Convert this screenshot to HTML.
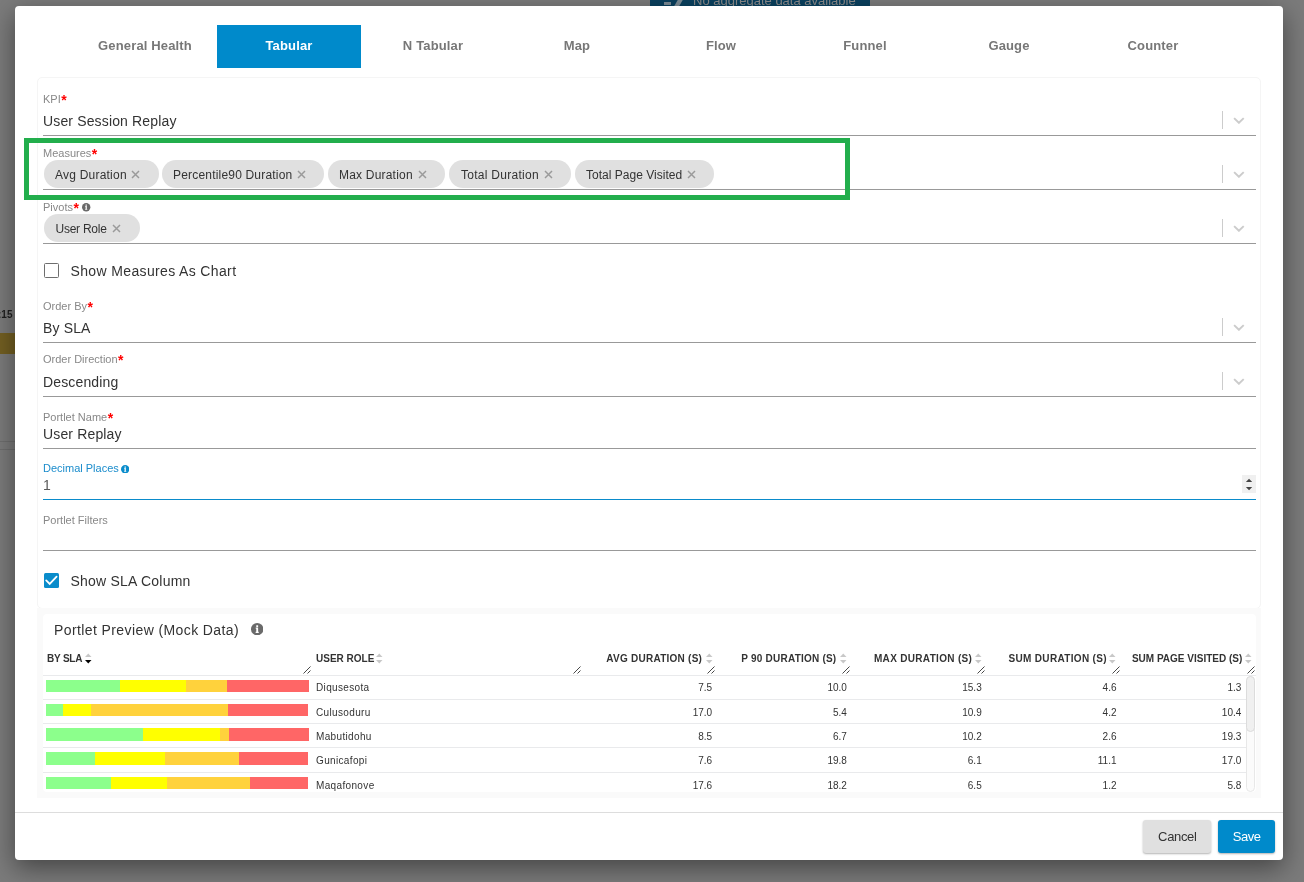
<!DOCTYPE html>
<html><head><meta charset="utf-8">
<style>
*{box-sizing:border-box;margin:0;padding:0}
html,body{width:1304px;height:882px;overflow:hidden}
body{background:#7b7b7b;font-family:"Liberation Sans",sans-serif;position:relative;color:#333;will-change:transform}
.a{position:absolute;white-space:nowrap;line-height:20px}
#modal{position:absolute;left:15px;top:6px;width:1268px;height:854px;background:#fff;border-radius:4px;box-shadow:0 8px 26px rgba(0,0,0,.45)}
.tab{position:absolute;top:25px;height:43px;width:144px;text-align:center;font-weight:bold;font-size:13px;line-height:41px;color:#777;letter-spacing:0.15px}
.tab.on{background:#008acb;color:#fff}
.lbl{font-size:11px;color:#888}
.lbl b{color:#f00;font-weight:bold;font-size:14px;position:relative;top:1.5px;left:0.5px;line-height:10px}
.val{font-size:14px;color:#333;letter-spacing:0.15px}
.ul{position:absolute;left:43px;width:1213px;height:1px;background:#999}
.sep{position:absolute;left:1222px;width:1px;height:18px;background:#ccc}
.chev{position:absolute;left:1233px;width:12px;height:7px}
.chip{position:absolute;height:28px;border-radius:14px;background:#e0e0e0}
.chip span{position:absolute;font-size:12px;color:#333;line-height:20px;white-space:nowrap}
.x{position:absolute;width:9px;height:9px}
.th{font-size:10px;font-weight:bold;color:#333}
.td{font-size:10px;color:#333}
</style></head><body>
<!-- background page bits -->
<div style="position:absolute;left:650px;top:0;width:220px;height:8px;background:#0a415f"></div>
<div style="position:absolute;left:664px;top:2px;width:7px;height:3px;background:#7d8c96"></div>
<div style="position:absolute;left:676px;top:0px;width:5px;height:6px;background:#7d8c96;transform:skewX(-30deg)"></div>
<div class="a" style="left:693px;top:-9px;font-size:13px;color:#8c8c8c">No aggregate data available</div>
<div class="a" style="left:-2px;top:305px;font-size:10px;font-weight:bold;color:#1e1e1e">:15</div>
<div style="position:absolute;left:0;top:333px;width:15px;height:21px;background:#735f22"></div>
<div style="position:absolute;left:0;top:441px;width:15px;height:1px;background:#6e6e6e"></div>
<div style="position:absolute;left:0;top:449px;width:15px;height:1px;background:#6e6e6e"></div>

<div id="modal"></div>

<!-- tabs -->
<div class="tab" style="left:73px">General Health</div>
<div class="tab on" style="left:217px">Tabular</div>
<div class="tab" style="left:361px">N Tabular</div>
<div class="tab" style="left:505px">Map</div>
<div class="tab" style="left:649px">Flow</div>
<div class="tab" style="left:793px">Funnel</div>
<div class="tab" style="left:937px">Gauge</div>
<div class="tab" style="left:1081px">Counter</div>

<!-- form card -->
<div style="position:absolute;left:37px;top:77px;width:1224px;height:532px;border:1px solid #f5f5f5;border-radius:5px"></div>

<!-- KPI -->
<div class="a lbl" style="left:43px;top:89px">KPI<b>*</b></div>
<div class="a val" style="left:43px;top:111px">User Session Replay</div>
<div class="ul" style="top:135px"></div>
<div class="sep" style="top:111px"></div>
<svg class="chev" style="top:117px" viewBox="0 0 12 7"><path d="M1.1 1.1l4.8 4.7 4.8-4.7" fill="none" stroke="#ccc" stroke-width="1.9"/></svg>

<!-- Measures -->
<div class="a lbl" style="left:43px;top:143px">Measures<b>*</b></div>
<div class="chip" style="left:44px;top:160px;width:115px"><span style="left:11px;top:5px;letter-spacing:0.22px">Avg Duration</span></div>
<div class="chip" style="left:162px;top:160px;width:162px"><span style="left:11px;top:5px;letter-spacing:0.19px">Percentile90 Duration</span></div>
<div class="chip" style="left:328px;top:160px;width:117px"><span style="left:11px;top:5px;letter-spacing:0.2px">Max Duration</span></div>
<div class="chip" style="left:449px;top:160px;width:122px"><span style="left:12px;top:5px;letter-spacing:0.28px">Total Duration</span></div>
<div class="chip" style="left:575px;top:160px;width:139px"><span style="left:11px;top:5px;letter-spacing:0.02px">Total Page Visited</span></div>
<div class="ul" style="top:189px"></div>
<div class="sep" style="top:165px"></div>
<svg class="chev" style="top:171px" viewBox="0 0 12 7"><path d="M1.1 1.1l4.8 4.7 4.8-4.7" fill="none" stroke="#ccc" stroke-width="1.9"/></svg>

<!-- Pivots -->
<div class="a lbl" style="left:43px;top:197px">Pivots<b>*</b></div>
<div class="chip" style="left:44px;top:214px;width:96px"><span style="left:11.5px;top:5px;letter-spacing:-0.25px">User Role</span></div>
<div class="ul" style="top:243px"></div>
<div class="sep" style="top:219px"></div>
<svg class="chev" style="top:225px" viewBox="0 0 12 7"><path d="M1.1 1.1l4.8 4.7 4.8-4.7" fill="none" stroke="#ccc" stroke-width="1.9"/></svg>


<!-- chip x icons -->
<svg class="x" style="left:131.2px;top:170px" viewBox="0 0 9 9"><path d="M1 1l7 7M8 1l-7 7" stroke="#9a9a9a" stroke-width="1.45"/></svg>
<svg class="x" style="left:297px;top:170px" viewBox="0 0 9 9"><path d="M1 1l7 7M8 1l-7 7" stroke="#9a9a9a" stroke-width="1.45"/></svg>
<svg class="x" style="left:418px;top:170px" viewBox="0 0 9 9"><path d="M1 1l7 7M8 1l-7 7" stroke="#9a9a9a" stroke-width="1.45"/></svg>
<svg class="x" style="left:544px;top:170px" viewBox="0 0 9 9"><path d="M1 1l7 7M8 1l-7 7" stroke="#9a9a9a" stroke-width="1.45"/></svg>
<svg class="x" style="left:687px;top:170px" viewBox="0 0 9 9"><path d="M1 1l7 7M8 1l-7 7" stroke="#9a9a9a" stroke-width="1.45"/></svg>
<svg class="x" style="left:112px;top:224px" viewBox="0 0 9 9"><path d="M1 1l7 7M8 1l-7 7" stroke="#9a9a9a" stroke-width="1.45"/></svg>
<!-- pivots info -->
<svg style="position:absolute;left:82.2px;top:203.4px;width:8.4px;height:8.4px" viewBox="0 0 12 12"><circle cx="6" cy="6" r="6" fill="#6a6a6a"/><path d="M5.1 2.3h1.8v1.5h-1.8z M4.6 4.4h2.3v4.1h0.6v1.1h-3v-1.1h0.6v-3h-0.5z" fill="#fff"/></svg>

<!-- show measures as chart -->
<div style="position:absolute;left:44px;top:263px;width:15px;height:15px;border:1.5px solid #6e6e6e;border-radius:1.5px"></div>
<div class="a val" style="left:70.5px;top:261px;letter-spacing:0.36px">Show Measures As Chart</div>

<!-- Order By -->
<div class="a lbl" style="left:43px;top:296px">Order By<b>*</b></div>
<div class="a val" style="left:43px;top:318px">By SLA</div>
<div class="ul" style="top:342px"></div>
<div class="sep" style="top:318px"></div>
<svg class="chev" style="top:324px" viewBox="0 0 12 7"><path d="M1.1 1.1l4.8 4.7 4.8-4.7" fill="none" stroke="#ccc" stroke-width="1.9"/></svg>

<!-- Order Direction -->
<div class="a lbl" style="left:43px;top:349px">Order Direction<b>*</b></div>
<div class="a val" style="left:43px;top:372px">Descending</div>
<div class="ul" style="top:396px"></div>
<div class="sep" style="top:372px"></div>
<svg class="chev" style="top:378px" viewBox="0 0 12 7"><path d="M1.1 1.1l4.8 4.7 4.8-4.7" fill="none" stroke="#ccc" stroke-width="1.9"/></svg>

<!-- Portlet Name -->
<div class="a lbl" style="left:43px;top:407px">Portlet Name<b>*</b></div>
<div class="a val" style="left:43px;top:424px">User Replay</div>
<div class="ul" style="top:448px"></div>

<!-- Decimal Places -->
<div class="a lbl" style="left:43px;top:458px;color:#1a8ccc">Decimal Places</div>
<svg style="position:absolute;left:121px;top:465px;width:8.4px;height:8.4px" viewBox="0 0 12 12"><circle cx="6" cy="6" r="6" fill="#0a8ccb"/><path d="M5.1 2.3h1.8v1.5h-1.8z M4.6 4.4h2.3v4.1h0.6v1.1h-3v-1.1h0.6v-3h-0.5z" fill="#fff"/></svg>
<div class="a val" style="left:43px;top:475px;color:#5a5a5a">1</div>
<div style="position:absolute;left:1242px;top:475px;width:14px;height:18px;background:#f0f0f0"></div>
<svg style="position:absolute;left:1244px;top:477px;width:10px;height:14px" viewBox="0 0 10 14"><path d="M1.9 5L5.05 1.8L8.2 5z M1.9 10L5.05 13.2L8.2 10z" fill="#444"/></svg>
<div class="ul" style="top:499px;background:#0a8bcb"></div>

<!-- Portlet Filters -->
<div class="a lbl" style="left:43px;top:510px">Portlet Filters</div>
<div class="ul" style="top:550px"></div>

<!-- show sla column -->
<div style="position:absolute;left:44px;top:573px;width:15px;height:15px;background:#0a8ccb;border-radius:1.5px"></div>
<svg style="position:absolute;left:44px;top:573px;width:15px;height:15px" viewBox="0 0 15 15"><path d="M2.2 7.4L5.7 10.9L12.6 3.6" fill="none" stroke="#fff" stroke-width="1.8" stroke-linecap="round"/></svg>
<div class="a val" style="left:70.5px;top:571px;letter-spacing:0.22px">Show SLA Column</div>

<!-- preview container -->
<div style="position:absolute;left:37px;top:608px;width:1224px;height:190px;background:#fafafa"></div>
<div style="position:absolute;left:43px;top:614px;width:1213px;height:178px;background:#fff;border-radius:4px"></div>
<div class="a val" style="left:54px;top:620px;letter-spacing:0.4px">Portlet Preview (Mock Data)</div>
<svg style="position:absolute;left:250.8px;top:623px;width:12.4px;height:12.4px" viewBox="0 0 12 12"><circle cx="6" cy="6" r="6" fill="#6a6a6a"/><path d="M5.1 2.3h1.8v1.5h-1.8z M4.6 4.4h2.3v4.1h0.6v1.1h-3v-1.1h0.6v-3h-0.5z" fill="#fff"/></svg>

<!-- table -->
<div style="position:absolute;left:43px;top:675px;width:1213px;height:1px;background:#e9eaec"></div>
<div class="a th" style="left:47px;top:649px;letter-spacing:-0.2px">BY SLA</div>
<svg style="position:absolute;left:85px;top:653px;width:7px;height:11px" viewBox="0 0 7 11"><path d="M0 4L3.25 0.5L6.5 4z" fill="#c8c8c8"/><path d="M0 7L3.25 10.5L6.5 7z" fill="#000"/></svg>
<div class="a th" style="left:316px;top:649px">USER ROLE</div>
<svg style="position:absolute;left:376.0px;top:653px;width:7px;height:11px" viewBox="0 0 7 11"><path d="M0 4L3.25 0.5L6.5 4z" fill="#c8c8c8"/><path d="M0 7L3.25 10.5L6.5 7z" fill="#c8c8c8"/></svg>
<div class="a th" style="right:601.8px;top:649px;text-align:right;letter-spacing:0.25px">AVG DURATION (S)</div>
<svg style="position:absolute;left:705.5px;top:653px;width:7px;height:11px" viewBox="0 0 7 11"><path d="M0 4L3.25 0.5L6.5 4z" fill="#c8c8c8"/><path d="M0 7L3.25 10.5L6.5 7z" fill="#c8c8c8"/></svg>
<div class="a th" style="right:467.6px;top:649px;text-align:right;letter-spacing:0.22px">P 90 DURATION (S)</div>
<svg style="position:absolute;left:840.0px;top:653px;width:7px;height:11px" viewBox="0 0 7 11"><path d="M0 4L3.25 0.5L6.5 4z" fill="#c8c8c8"/><path d="M0 7L3.25 10.5L6.5 7z" fill="#c8c8c8"/></svg>
<div class="a th" style="right:331.8px;top:649px;text-align:right;letter-spacing:0.32px">MAX DURATION (S)</div>
<svg style="position:absolute;left:974.5px;top:653px;width:7px;height:11px" viewBox="0 0 7 11"><path d="M0 4L3.25 0.5L6.5 4z" fill="#c8c8c8"/><path d="M0 7L3.25 10.5L6.5 7z" fill="#c8c8c8"/></svg>
<div class="a th" style="right:197.2px;top:649px;text-align:right;letter-spacing:0.32px">SUM DURATION (S)</div>
<svg style="position:absolute;left:1109.0px;top:653px;width:7px;height:11px" viewBox="0 0 7 11"><path d="M0 4L3.25 0.5L6.5 4z" fill="#c8c8c8"/><path d="M0 7L3.25 10.5L6.5 7z" fill="#c8c8c8"/></svg>
<div class="a th" style="right:61.7px;top:649px;text-align:right">SUM PAGE VISITED (S)</div>
<svg style="position:absolute;left:1244.5px;top:653px;width:7px;height:11px" viewBox="0 0 7 11"><path d="M0 4L3.25 0.5L6.5 4z" fill="#c8c8c8"/><path d="M0 7L3.25 10.5L6.5 7z" fill="#c8c8c8"/></svg>
<svg style="position:absolute;left:302.5px;top:665px;width:9px;height:10px" viewBox="0 0 9 10"><path d="M0.5 8.5L7.5 1.5M4.5 8.5L7.5 5.5" stroke="#333" stroke-width="0.9"/></svg>
<svg style="position:absolute;left:572.5px;top:665px;width:9px;height:10px" viewBox="0 0 9 10"><path d="M0.5 8.5L7.5 1.5M4.5 8.5L7.5 5.5" stroke="#333" stroke-width="0.9"/></svg>
<svg style="position:absolute;left:706.5px;top:665px;width:9px;height:10px" viewBox="0 0 9 10"><path d="M0.5 8.5L7.5 1.5M4.5 8.5L7.5 5.5" stroke="#333" stroke-width="0.9"/></svg>
<svg style="position:absolute;left:841.5px;top:665px;width:9px;height:10px" viewBox="0 0 9 10"><path d="M0.5 8.5L7.5 1.5M4.5 8.5L7.5 5.5" stroke="#333" stroke-width="0.9"/></svg>
<svg style="position:absolute;left:976.5px;top:665px;width:9px;height:10px" viewBox="0 0 9 10"><path d="M0.5 8.5L7.5 1.5M4.5 8.5L7.5 5.5" stroke="#333" stroke-width="0.9"/></svg>
<svg style="position:absolute;left:1111.5px;top:665px;width:9px;height:10px" viewBox="0 0 9 10"><path d="M0.5 8.5L7.5 1.5M4.5 8.5L7.5 5.5" stroke="#333" stroke-width="0.9"/></svg>
<svg style="position:absolute;left:1246.5px;top:665px;width:9px;height:10px" viewBox="0 0 9 10"><path d="M0.5 8.5L7.5 1.5M4.5 8.5L7.5 5.5" stroke="#333" stroke-width="0.9"/></svg>
<div style="position:absolute;left:43px;top:699px;width:1203px;height:1px;background:#e9eaec"></div>
<div style="position:absolute;left:43px;top:723px;width:1203px;height:1px;background:#e9eaec"></div>
<div style="position:absolute;left:43px;top:747px;width:1203px;height:1px;background:#e9eaec"></div>
<div style="position:absolute;left:43px;top:772px;width:1203px;height:1px;background:#e9eaec"></div>
<div style="position:absolute;left:46px;top:680px;width:74px;height:12px;background:#8cff8c"></div>
<div style="position:absolute;left:120px;top:680px;width:66px;height:12px;background:#ffff00"></div>
<div style="position:absolute;left:186px;top:680px;width:41px;height:12px;background:#ffd23c"></div>
<div style="position:absolute;left:227px;top:680px;width:82px;height:12px;background:#ff6666"></div>
<div class="a td" style="left:316px;top:678.03px;letter-spacing:0.35px">Diqusesota</div>
<div class="a td" style="right:591.9px;top:678.03px">7.5</div>
<div class="a td" style="right:457.1px;top:678.03px">10.0</div>
<div class="a td" style="right:322.3px;top:678.03px">15.3</div>
<div class="a td" style="right:187.5px;top:678.03px">4.6</div>
<div class="a td" style="right:62.7px;top:678.03px">1.3</div>
<div style="position:absolute;left:46px;top:704px;width:17px;height:12px;background:#8cff8c"></div>
<div style="position:absolute;left:63px;top:704px;width:28px;height:12px;background:#ffff00"></div>
<div style="position:absolute;left:91px;top:704px;width:137px;height:12px;background:#ffd23c"></div>
<div style="position:absolute;left:228px;top:704px;width:80px;height:12px;background:#ff6666"></div>
<div class="a td" style="left:316px;top:702.53px;letter-spacing:0.35px">Culusoduru</div>
<div class="a td" style="right:591.9px;top:702.53px">17.0</div>
<div class="a td" style="right:457.1px;top:702.53px">5.4</div>
<div class="a td" style="right:322.3px;top:702.53px">10.9</div>
<div class="a td" style="right:187.5px;top:702.53px">4.2</div>
<div class="a td" style="right:62.7px;top:702.53px">10.4</div>
<div style="position:absolute;left:46px;top:728px;width:97px;height:13px;background:#8cff8c"></div>
<div style="position:absolute;left:143px;top:728px;width:77px;height:13px;background:#ffff00"></div>
<div style="position:absolute;left:220px;top:728px;width:9px;height:13px;background:#ffd23c"></div>
<div style="position:absolute;left:229px;top:728px;width:80px;height:13px;background:#ff6666"></div>
<div class="a td" style="left:316px;top:727.03px;letter-spacing:0.35px">Mabutidohu</div>
<div class="a td" style="right:591.9px;top:727.03px">8.5</div>
<div class="a td" style="right:457.1px;top:727.03px">6.7</div>
<div class="a td" style="right:322.3px;top:727.03px">10.2</div>
<div class="a td" style="right:187.5px;top:727.03px">2.6</div>
<div class="a td" style="right:62.7px;top:727.03px">19.3</div>
<div style="position:absolute;left:46px;top:752px;width:49px;height:13px;background:#8cff8c"></div>
<div style="position:absolute;left:95px;top:752px;width:70px;height:13px;background:#ffff00"></div>
<div style="position:absolute;left:165px;top:752px;width:74px;height:13px;background:#ffd23c"></div>
<div style="position:absolute;left:239px;top:752px;width:69px;height:13px;background:#ff6666"></div>
<div class="a td" style="left:316px;top:751.03px;letter-spacing:0.35px">Gunicafopi</div>
<div class="a td" style="right:591.9px;top:751.03px">7.6</div>
<div class="a td" style="right:457.1px;top:751.03px">19.8</div>
<div class="a td" style="right:322.3px;top:751.03px">6.1</div>
<div class="a td" style="right:187.5px;top:751.03px">11.1</div>
<div class="a td" style="right:62.7px;top:751.03px">17.0</div>
<div style="position:absolute;left:46px;top:777px;width:65px;height:12px;background:#8cff8c"></div>
<div style="position:absolute;left:111px;top:777px;width:56px;height:12px;background:#ffff00"></div>
<div style="position:absolute;left:167px;top:777px;width:83px;height:12px;background:#ffd23c"></div>
<div style="position:absolute;left:250px;top:777px;width:58px;height:12px;background:#ff6666"></div>
<div class="a td" style="left:316px;top:775.53px;letter-spacing:0.35px">Maqafonove</div>
<div class="a td" style="right:591.9px;top:775.53px">17.6</div>
<div class="a td" style="right:457.1px;top:775.53px">18.2</div>
<div class="a td" style="right:322.3px;top:775.53px">6.5</div>
<div class="a td" style="right:187.5px;top:775.53px">1.2</div>
<div class="a td" style="right:62.7px;top:775.53px">5.8</div>
<div style="position:absolute;left:1246px;top:676px;width:9px;height:116px;background:#fbfbfb;border:1px solid #e8e8e8;border-radius:4.5px"></div>
<div style="position:absolute;left:1246px;top:676px;width:9px;height:56px;background:#f0f0f0;border:1px solid #dcdcdc;border-radius:4.5px"></div>
<!-- footer -->
<div style="position:absolute;left:15px;top:812px;width:1268px;height:1px;background:#ddd"></div>
<div style="position:absolute;left:1143px;top:820px;width:68px;height:33px;background:#e0e0e0;border-radius:3px;box-shadow:0 1px 2px rgba(0,0,0,.3)"></div>
<div class="a" style="left:1143.3px;top:827px;width:68px;text-align:center;font-size:13px;color:#333;letter-spacing:-0.35px">Cancel</div>
<div style="position:absolute;left:1218px;top:820px;width:57px;height:33px;background:#008acb;border-radius:3px;box-shadow:0 1px 2px rgba(0,0,0,.3)"></div>
<div class="a" style="left:1218.2px;top:827px;width:57px;text-align:center;font-size:13px;color:#fff;letter-spacing:-0.4px">Save</div>

<!-- green highlight -->
<div style="position:absolute;left:24px;top:138px;width:826px;height:62px;border:5px solid #22ae4c"></div>

</body></html>
